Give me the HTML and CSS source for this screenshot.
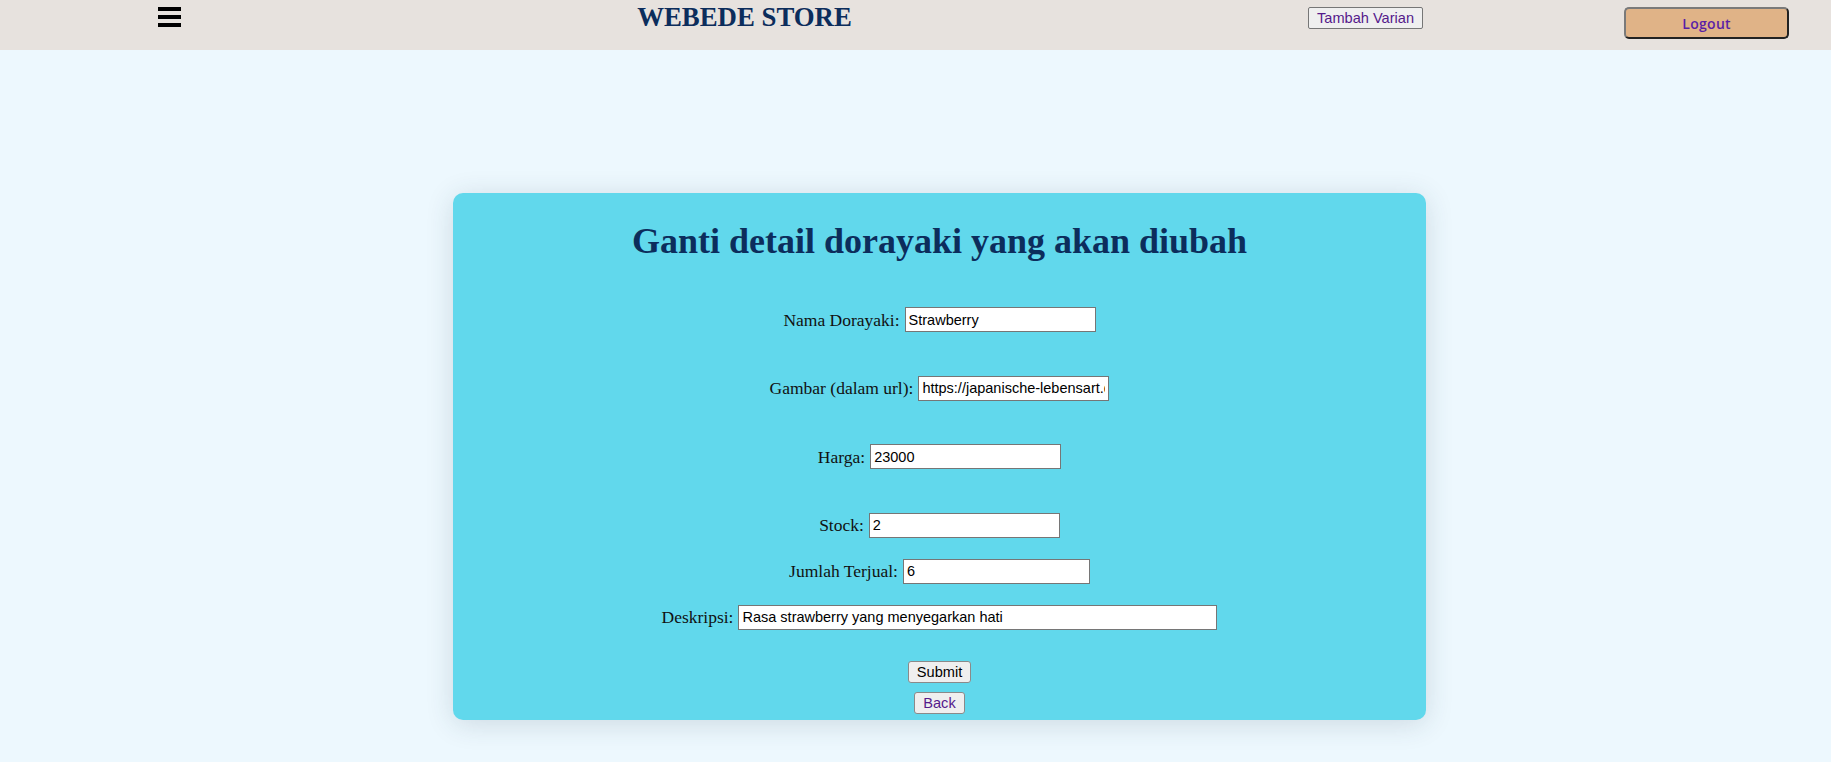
FILE: index.html
```html
<!DOCTYPE html>
<html lang="id">
<head>
<meta charset="utf-8">
<title>WEBEDE STORE - Ubah Dorayaki</title>
<link rel="stylesheet" href="styles.css">
</head>
<body>
<header class="topbar">
  <button class="menu-btn" type="button" aria-label="Menu"><span></span><span></span><span></span></button>
  <div class="brand">WEBEDE STORE</div>
  <button class="nav-btn" type="button"><a href="#">Tambah Varian</a></button>
  <button class="logout-btn" type="button"><a href="#">Logout</a></button>
</header>
<main class="page">
  <section class="card">
    <h1 class="card-title">Ganti detail dorayaki yang akan diubah</h1>
    <form class="edit-form">
      <div class="row spaced"><label for="nama">Nama Dorayaki:</label><input id="nama" class="field" type="text" value="Strawberry"></div>
      <div class="row spaced"><label for="gambar">Gambar (dalam url):</label><input id="gambar" class="field" type="text" value="https://japanische-lebensart.de/wp-content/uploads/dorayaki-strawberry.jpg"></div>
      <div class="row spaced"><label for="harga">Harga:</label><input id="harga" class="field" type="text" value="23000"></div>
      <div class="row tight"><label for="stock">Stock:</label><input id="stock" class="field" type="text" value="2"></div>
      <div class="row tight"><label for="terjual">Jumlah Terjual:</label><input id="terjual" class="field narrow" type="text" value="6"></div>
      <div class="row"><label for="deskripsi">Deskripsi:</label><input id="deskripsi" class="field wide" type="text" value="Rasa strawberry yang menyegarkan hati"></div>
      <div class="actions submit-wrap"><input class="btn" type="submit" value="Submit"></div>
      <div class="actions back-wrap"><button class="btn" type="button"><a href="#">Back</a></button></div>
    </form>
  </section>
</main>
</body>
</html>
```
FILE: styles.css
```css
html, body {
  margin: 0;
  padding: 0;
}
body {
  background: #edf8fe;
  font-family: "Liberation Serif", "Times New Roman", serif;
  min-height: 762px;
}
a {
  color: #551a8b;
  text-decoration: none;
}

/* ---------- top bar ---------- */
.topbar {
  display: flex;
  align-items: flex-start;
  height: 50px;
  background: #e7e2de;
  box-sizing: border-box;
}
.menu-btn {
  display: flex;
  flex-direction: column;
  justify-content: space-between;
  width: 23px;
  height: 20px;
  margin: 7px 0 0 158px;
  padding: 0;
  border: 0;
  background: transparent;
  cursor: pointer;
}
.menu-btn span {
  display: block;
  height: 4px;
  background: #000;
}
.brand {
  width: 215px;
  margin: 4px 0 0 456px;
  font-family: "Liberation Serif", "Times New Roman", serif;
  font-weight: bold;
  font-size: 26.8px;
  line-height: 27px;
  color: #0c2d5c;
  text-align: center;
  white-space: nowrap;
}
.nav-btn {
  margin: 7px 0 0 456px;
  height: 22px;
  padding: 0 8px;
  border: 1px solid #767676;
  border-radius: 2px;
  background: #efefef;
  font-family: "Liberation Sans", Arial, sans-serif;
  font-size: 14.6px;
  line-height: 20px;
  white-space: nowrap;
}
.logout-btn {
  margin: 7px 0 0 201px;
  width: 165px;
  height: 32px;
  padding: 0;
  border: 2px solid;
  border-color: #7a7a7a #222 #222 #7a7a7a;
  border-radius: 5px;
  background: #e0b387;
  font-family: "Open Sans", "Liberation Sans", sans-serif;
  font-weight: 600;
  font-size: 14px;
  letter-spacing: 0.3px;
}
.logout-btn a {
  color: #5a1fa6;
}

/* ---------- card ---------- */
.page {
  padding-top: 143px;
}
.card {
  width: 973px;
  margin-left: 453px;
  box-sizing: border-box;
  padding: 27px 0 6px;
  background: #61d8ec;
  border-radius: 10px;
  box-shadow: 0 4px 28px rgba(40, 60, 80, 0.16);
}
.card-title {
  margin: 0 0 45px;
  font-family: "Liberation Serif", "Times New Roman", serif;
  font-weight: bold;
  font-size: 36px;
  line-height: 42px;
  color: #0c2d5c;
  text-align: center;
}

/* ---------- form ---------- */
.row {
  display: flex;
  justify-content: center;
  align-items: center;
  gap: 5px;
  height: 25px;
  font-size: 17.5px;
  color: #111;
}
.row.spaced {
  margin-bottom: 43.5px;
}
.row.tight {
  margin-bottom: 21px;
}
.row label {
  line-height: 20px;
  white-space: nowrap;
}
.field {
  width: 191px;
  height: 25px;
  box-sizing: border-box;
  margin: 0;
  padding: 1px 3px;
  border: 1px solid #767676;
  border-radius: 0;
  background: #fff;
  font-family: "Liberation Sans", Arial, sans-serif;
  font-size: 14.5px;
  color: #000;
}
.field.narrow {
  width: 187px;
}
.field.wide {
  width: 479px;
}
.actions {
  display: flex;
  justify-content: center;
}
.submit-wrap {
  margin-top: 31.5px;
}
.back-wrap {
  margin-top: 9px;
}
.btn {
  height: 22px;
  margin: 0;
  padding: 0 8px;
  border: 1px solid #8a8a8a;
  border-radius: 3px;
  background: #efefef;
  font-family: "Liberation Sans", Arial, sans-serif;
  font-size: 14.6px;
  line-height: 20px;
  color: #000;
}
```
